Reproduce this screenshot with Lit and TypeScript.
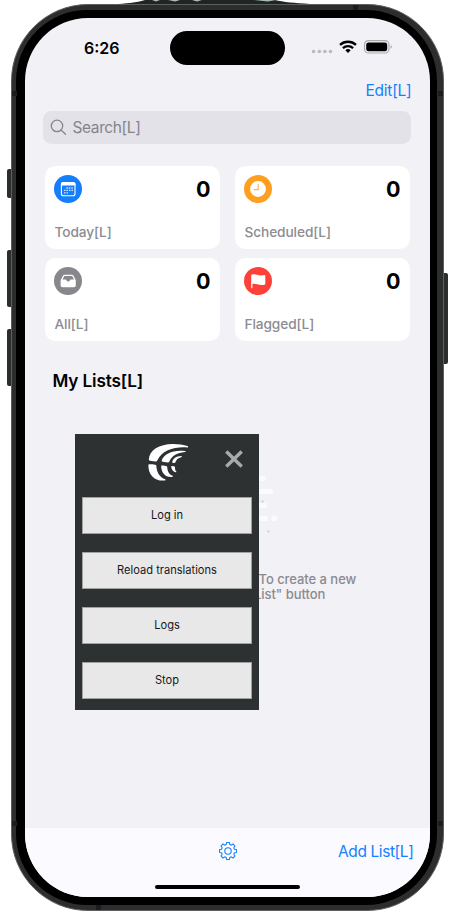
import { LitElement, html, css, svg } from "lit";
import { customElement, property } from "lit/decorators.js";

const glyphs = {
  today: svg`<circle cx="14" cy="14" r="14" fill="#147efb"/>
    <rect x="7.4" y="7.6" width="13.6" height="13.2" rx="2" fill="none" stroke="#fff" stroke-width="1.1"/>
    <path d="M7 10.6V9a2 2 0 0 1 2-2h10.4a2 2 0 0 1 2 2v1.6z" fill="#fff"/>
    <path d="M12.3 13h7M10 15.4h9.3M10 17.9h5" stroke="#cfe3fe" stroke-width="1.3" stroke-dasharray="1.5 1"/>`,
  scheduled: svg`<circle cx="14" cy="14" r="14" fill="#fe9f1f"/>
    <circle cx="14" cy="14" r="7.9" fill="#fff"/>
    <path d="M14.2 9v5.600H9.800" fill="none" stroke="#fdb458" stroke-width="1.2"/>`,
  all: svg`<circle cx="14" cy="14" r="14" fill="#87878c"/>
    <path d="M10.6 7.800h7.400a1.600 1.600 0 0 1 1.400.800l2 4c.300.500.400 1 .400 1.500v4.200a1.900 1.900 0 0 1-1.900 1.900H8.500a1.900 1.900 0 0 1-1.900-1.900v-4.200c0-.500.100-1 .400-1.500l2.100-4a1.600 1.600 0 0 1 1.500-.800z" fill="#fff"/>
    <path d="M10.400 9h7.800l1.800 3.600h-3.300c-.4 0-.6.2-.7.6a1.900 1.900 0 0 1-3.6 0c-.1-.4-.3-.6-.7-.6H8.500z" fill="#87878c"/>`,
  flagged: svg`<circle cx="14" cy="14" r="14" fill="#fd4138"/>
    <path d="M7 8c1.700-1.100 3.700-.9 6-.2 2.500.8 4.900 1 7.500.3.600-.1 1 .1 1 .6v8.100c0 .5-.3.8-.8.9-2.500.6-4.700.4-7.200-.4-2-.6-3.400-.7-4.900-.2v3.700a.6.6 0 0 1-1.200 0V8.700c0-.3.1-.5.4-.7z" transform="translate(-.2 0)" fill="#fff"/>`,
};

@customElement("reminder-card")
class ReminderCard extends LitElement {
  @property() kind: keyof typeof glyphs = "today";
  @property() label = "";
  @property() count = "0";
  static styles = css`
    :host { display: flex; flex-direction: column; justify-content: space-between; box-sizing: border-box;
      height: 83px; padding: 9px 9px 8px 9px; border-radius: 10.5px; background: #fff; }
    .row { display: flex; justify-content: space-between; }
    svg { width: 28px; height: 28px; display: block; }
    .count { font-size: 21.5px; line-height: 29px; font-weight: 700; color: #000; }
    .label { font-size: 13.7px; line-height: 18px; font-weight: 450; letter-spacing: -0.1px; color: #8c8c91; padding-left: 1px; white-space: nowrap; }
  `;
  render() {
    return html`<div class="row">
        <svg viewBox="0 0 28 28">${glyphs[this.kind]}</svg>
        <span class="count">${this.count}</span>
      </div>
      <div class="label">${this.label}</div>`;
  }
}

const gear = () => {
  const pts: string[] = [];
  const n = 8;
  for (let i = 0; i < n; i++) {
    const a = (i * 2 * Math.PI) / n - Math.PI / 2;
    for (const [d, r] of [[-0.27, 6.7], [-0.17, 8.6], [0.17, 8.6], [0.27, 6.7]]) {
      pts.push(`${(10 + r * Math.cos(a + d)).toFixed(2)} ${(10 + r * Math.sin(a + d)).toFixed(2)}`);
    }
  }
  return `M${pts.join("L")}Z`;
};

@customElement("app-root")
class AppRoot extends LitElement {
  static styles = css`
    :host { display: block; position: relative; width: 450px; height: 920px; overflow: hidden; background: #fff;
      font-family: Inter, "Liberation Sans", sans-serif; box-sizing: border-box; padding: 4px 0 0 10.5px; }
    .edge { position: absolute; background: #2b2e2d; border-radius: 2px; }
    .silent { left: 7px; top: 169px; width: 6px; height: 29px; }
    .up { left: 7px; top: 250px; width: 6px; height: 57px; }
    .down { left: 7px; top: 329px; width: 6px; height: 57px; }
    .power { left: 440px; top: 273px; width: 7.5px; height: 91px; }
    .lens { position: absolute; left: 118px; top: 0; width: 192px; height: 6px; }
    .phone { position: relative; box-sizing: border-box; width: 433px; height: 907px; border-radius: 77px;
      background: #2b2e2d; border: 1.5px solid #5d605f; padding: 4.5px; }
    .antenna { position: absolute; background: #1b1c21; width: 5px; height: 5px; }
    .tl { left: 0; top: 86px; }
    .tr { right: 0; top: 86px; }
    .bl { left: 0; top: 816px; }
    .br { right: 0; top: 816px; }
    .bottom { left: 84px; bottom: 0; }
    .top { right: 85px; top: 0; }
    .bezel { box-sizing: border-box; width: 421px; height: 895px; border-radius: 71px; background: #000; padding: 8px 8px 8px 8.5px; }
    .screen { width: 405px; height: 879px; border-radius: 63px; background: #f2f1f6; overflow: hidden;
      display: flex; flex-direction: column; position: relative; }
    .status { height: 57px; display: flex; align-items: flex-start; flex: none; box-sizing: border-box; padding: 13px 36.5px 0 59.5px; }
    .time { font-size: 16px; font-weight: 600; line-height: 20px; margin-top: 7px; width: 86px; }
    .island { width: 115.5px; height: 34px; border-radius: 17px; background: #000; }
    .signals { width: 84px; height: 20px; margin: 6px 0 0 24px; flex: none; }
    .nav { height: 36px; flex: none; box-sizing: border-box; padding: 6px 18px 0 0; text-align: right; font-size: 15.5px; line-height: 20px; letter-spacing: -0.25px; color: #1481fd; }
    .search { height: 33px; flex: none; margin: 0 18.5px 0 18px; background: #e3e2e8; border-radius: 8.5px; display: flex; align-items: center;
      padding-left: 7px; gap: 6px; color: #858489; font-size: 15.5px; letter-spacing: -0.4px; }
    .search span { padding-top: 1px; }
    .search svg { width: 17px; height: 17px; }
    .cards { display: grid; grid-template-columns: 175px 175px; gap: 9px 15px; margin: 22px 0 0 20px; flex: none; }
    h2 { margin: 29px 0 0 28px; font-size: 17.2px; line-height: 22px; font-weight: 600; letter-spacing: -0.15px; }
    .empty { margin: 180px 0 0 234px; font-size: 13px; line-height: 15.3px; font-weight: 450; letter-spacing: -0.05px; color: #8b8a8f; white-space: nowrap; }
    .line2 { margin-left: -4.5px; }
    .bar { height: 69px; margin-top: auto; background: #fbfaff; flex: none; display: grid; grid-template-columns: 1fr auto 1fr; align-items: start;
      box-sizing: border-box; padding: 13px 16px 0 17px; color: #1481fd; font-size: 15.5px; line-height: 20px; letter-spacing: -0.4px; }
    .bar svg { grid-column: 2; width: 20px; height: 20px; }
    .add { text-align: right; padding-top: 1px; }
    .home { position: absolute; left: 130px; bottom: 7.5px; width: 145px; height: 4.5px; border-radius: 3px; background: #000; }
    .ghost { position: absolute; left: 233px; top: 455px; width: 22px; height: 64px; }
    .popup { position: absolute; left: 50px; top: 416.5px; width: 184px; height: 276px; background: #2d3132; box-sizing: border-box; padding: 0 7px; }
    .head { height: 62.5px; display: flex; align-items: flex-start; box-sizing: border-box; padding: 9px 8px 0 65px; justify-content: space-between; }
    .logo { width: 42px; height: 40px; }
    .close { width: 20px; height: 20px; margin-top: 6px; }
    .actions { display: flex; flex-direction: column; gap: 18px; }
    button { display: block; width: 170px; height: 37px; border: 1px solid #a0a1a1; background: #e8e8e8; color: #17171b; padding: 0 0 0 1px;
      font: 400 11.1px Inter, "Liberation Sans", sans-serif; }
  `;

  render() {
    return html`
      <svg class="lens" viewBox="0 0 192 6">
        <path d="M0 6V4C12 3 20 2.5 27 0h130c8 2 20 3 35 4v2z" fill="#202423"/>
        <path d="M34 0h8l-4 1.500zM50 0h12l-5 1.500zM74 0h10l-5 1.500zM136 0h22l-8 1.500z" fill="#a9bdb5"/>
      </svg>
      <div class="edge silent"></div><div class="edge up"></div><div class="edge down"></div><div class="edge power"></div>
      <div class="phone">
        <div class="bezel">
          <div class="screen">
            <div class="status">
              <div class="time">6:26</div>
              <div class="island"></div>
              <svg class="signals" viewBox="0 0 84 20">
                <g fill="#b9b9be"><circle cx="4.600" cy="14.500" r="1.800"/><circle cx="10.300" cy="14.500" r="1.800"/><circle cx="15.900" cy="14.500" r="1.800"/><circle cx="21.500" cy="14.500" r="1.800"/></g>
                <g fill="none" stroke="#000" stroke-width="2.300">
                  <path d="M31 7.900a11.700 11.700 0 0 1 16 0"/><path d="M33.900 11.200a7.500 7.500 0 0 1 10.200 0"/>
                </g>
                <path d="M39 16l-2.700-2.700a4 4 0 0 1 5.400 0z" fill="#000"/>
                <rect x="55.500" y="3.600" width="24.500" height="12.400" rx="3.900" fill="none" stroke="#a9a9ad" stroke-width="1.100"/>
                <rect x="57.200" y="5.400" width="21" height="8.900" rx="2.400"/>
                <path d="M81.600 8c1.500.600 1.500 3.200 0 3.800z" fill="#a0a0a4"/>
              </svg>
            </div>
            <div class="nav">Edit[L]</div>
            <div class="search">
              <svg viewBox="0 0 17 17" fill="none" stroke="#858489" stroke-width="1.300" stroke-linecap="round"><circle cx="7" cy="6.900" r="5.700"/><path d="M11.200 11.100l4.300 4.200"/></svg>
              <span>Search[L]</span>
            </div>
            <div class="cards">
              <reminder-card kind="today" label="Today[L]"></reminder-card>
              <reminder-card kind="scheduled" label="Scheduled[L]"></reminder-card>
              <reminder-card kind="all" label="All[L]"></reminder-card>
              <reminder-card kind="flagged" label="Flagged[L]"></reminder-card>
            </div>
            <h2>My Lists[L]</h2>
            <div class="empty"><div>To create a new</div><div class="line2">List" button</div></div>
            <div class="bar">
              <svg viewBox="0 0 20 20" fill="none" stroke="#1481fd" stroke-width="1.100" stroke-linejoin="round"><path d="${gear()}"/><circle cx="10" cy="10" r="3.200"/></svg>
              <span class="add">Add List[L]</span>
            </div>
            <div class="home"></div>
            <svg class="ghost" viewBox="0 0 22 64">
              <g fill="#fbfbfe"><rect x="0" y="3" width="8" height="5" rx="2.500"/><rect x="0" y="16" width="15" height="5" rx="1.500"/><rect x="0" y="30" width="9" height="5" rx="2"/><rect x="0" y="43" width="10" height="5" rx="1.500"/><circle cx="16.300" cy="45.500" r="3"/></g>
              <g fill="#d4d4d9"><circle cx="4.500" cy="28.500" r="1.200"/><circle cx="10.500" cy="58.500" r="1.200"/></g>
            </svg>
            <div class="popup">
              <div class="head">
                <svg class="logo" viewBox="0 0 42 40" fill="#fff">
                  <path d="M1.800 16.500C2.300 7 12 1 26 .9c5.500 0 10.500.8 14.500 2 .8.300.7 1.700-.2 1.600C27 3.600 15.500 7.300 10.400 17.200c-.5 1-1.100 1.400-2.200 1.200l-5.300-.7c-.7-.1-1.100-.5-1.100-1.200z"/>
                  <path d="M14.800 17.300C17 10.800 26 6.500 38 7.900c.9.100.9 1.100 0 1.200-8 .8-12.700 3.500-15.600 9.400-.3.800-1 1.200-1.900.9l-5-.7c-.6-.1-.9-.7-.7-1.400z"/>
                  <path d="M25.200 19.300c.5-3.500 4-6.300 9-6.300.8 0 .9 1 .1 1.200-3.300.7-5.200 2.500-6 5.400-.2.700-3.300.4-3.100-.3z"/>
                  <path d="M1.400 21.400c2.500-.5 5.800-.2 7.900.8C9.400 29 12.800 34.400 18.100 36.200c.8.300.7 1.200-.2 1.300C8 38.500.9 32 1.400 21.400z"/>
                  <path d="M14.200 22.500c2-.3 4.300.1 6 .9.100 5 2 8 5.200 9.200.8.400.6 1.200-.2 1.300-6.500.8-11.200-4-11-11.400z"/>
                  <path d="M24.200 23.200c1.200-.2 2.800 0 3.800.5-.1 2.400.3 3.700 1.300 4.800.4.600-.1 1-.7.800-2.800-.7-4.500-3.200-4.400-6.100z"/>
                </svg>
                <svg class="close" viewBox="0 0 20 20"><path d="M2.300 2.500l15.400 15M17.700 2.500L2.300 17.500" stroke="#a9abab" stroke-width="3.400"/></svg>
              </div>
              <div class="actions">
                ${["Log in", "Reload translations", "Logs", "Stop"].map((t) => html`<button>${t}</button>`)}
              </div>
            </div>
          </div>
        </div>
        <div class="antenna tl"></div><div class="antenna tr"></div><div class="antenna bl"></div><div class="antenna br"></div>
        <div class="antenna bottom"></div><div class="antenna top"></div>
      </div>`;
  }
}
